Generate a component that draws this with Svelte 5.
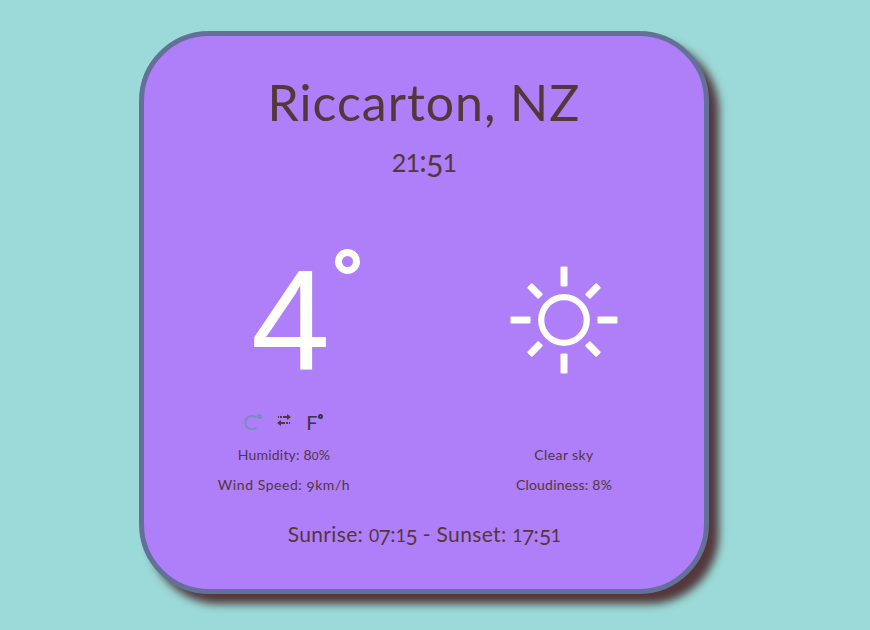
<script>
  const weather = {
    place: 'Riccarton, NZ',
    time: '21:51',
    temperature: '4',
    humidity: 'Humidity: 80%',
    wind: 'Wind Speed: 9km/h',
    sky: 'Clear sky',
    clouds: 'Cloudiness: 8%',
    sun: 'Sunrise: 07:15 - Sunset: 17:51'
  };
  // Old-style figures: 0-2 sit at x-height, 3-5, 7 and 9 drop below the baseline.
  const kind = (c) => ('012'.includes(c) ? 'small' : '34579'.includes(c) ? 'low' : '');
  const rays = [0, 45, 90, 135, 180, 225, 270, 315];
</script>

{#snippet figures(text)}{#each text.split(/([0-9])/) as part}{#if part && kind(part)}<span class={kind(part)}>{part}</span>{:else}{part}{/if}{/each}{/snippet}

<main>
  <section class="card">
    <h1>{weather.place}</h1>
    <div class="time">{@render figures(weather.time)}</div>
    <div class="columns">
      <div class="column">
        <div class="visual temperature">
          <span class="value">{weather.temperature}</span><span class="ring"></span>
        </div>
        <div class="units">
          <span class="unit active">C<i></i></span>
          <svg class="swap" width="14" height="12" viewBox="0 0 14 12" fill="#53373b">
            <path d="M1 2h1v2H1zM3 2h2v2H3zM6 2h4V0l4 3-4 3V4H6zM13 8h-1v2h1zM11 8H9v2h2zM8 8H4V6L0 9l4 3v-2h4z" />
          </svg>
          <span class="unit">F<i></i></span>
        </div>
        <p class="humidity">{@render figures(weather.humidity)}</p>
        <p class="wind">{@render figures(weather.wind)}</p>
      </div>
      <div class="column">
        <div class="visual">
          <svg class="sun" width="110" height="110" viewBox="-55 -55 110 110">
            <circle r="22.800" fill="none" stroke="#fffffb" stroke-width="6.200" />
            {#each rays as angle}
              <rect x="-3.500" y={angle % 90 ? -49 : -53.5} width="7" height={angle % 90 ? 16 : 20} rx="1" fill="#fffffb" transform="rotate({angle})" />
            {/each}
          </svg>
        </div>
        <div class="units"></div>
        <p class="sky">{@render figures(weather.sky)}</p>
        <p class="clouds">{@render figures(weather.clouds)}</p>
      </div>
    </div>
    <div class="sunline">{@render figures(weather.sun)}</div>
  </section>
</main>

<style>
  :global(body) { margin: 0; background: #9bdad8; }
  main {
    height: 630px;
    box-sizing: border-box;
    padding: 31px 0 0 139px;
    overflow: hidden;
    background: #9bdad8;
    font-family: Lato, sans-serif;
    color: #53373b;
  }
  .card {
    box-sizing: border-box;
    width: 570px;
    height: 563px;
    border: 5px solid #637199;
    border-radius: 70px;
    background: #af7ef9;
    box-shadow: 10px 10px 8px #53373b;
    padding-top: 36px;
    text-align: center;
    white-space: nowrap;
  }
  h1 { margin: 0; font-size: 50px; line-height: 60px; font-weight: 400; letter-spacing: 1px; }
  .time { margin-top: 10px; font-size: 30px; line-height: 36px; letter-spacing: -0.9px; }
  .small { font-size: .84em; line-height: 0; }
  .low { position: relative; top: .15em; line-height: 0; }
  .columns { display: flex; margin-top: 33px; }
  .column { width: 280px; }
  .visual { height: 193px; display: flex; justify-content: center; align-items: flex-start; }
  .temperature { color: #fffffb; justify-content: flex-start; }
  .value { margin: 40px 0 0 107px; width: 76px; font-family: "Liberation Sans", sans-serif; font-size: 142px; line-height: 138px; }
  .ring { margin: 38px 0 0 8px; box-sizing: border-box; width: 25px; height: 25px; border: 7px solid; border-radius: 50%; }
  .sun { margin-top: 54px; }
  .units { height: 36px; display: flex; justify-content: center; align-items: center; gap: 15px; font-size: 20px; line-height: 24px; }
  .unit { display: flex; color: #3d304d; }
  .unit i { box-sizing: border-box; width: 5px; height: 5px; margin: 4px 0 0 0; border: 2px solid; border-radius: 50%; }
  .active { color: #7b8bbd; font-size: 21px; margin-left: -2px; }
  .swap { margin-top: -4px; }
  p { margin: 0; font-size: 14px; line-height: 30px; }
  .humidity { letter-spacing: .2px; }
  .wind { letter-spacing: .55px; }
  .sky { letter-spacing: .4px; }
  .clouds { letter-spacing: .2px; }
  .sunline { margin-top: 19px; font-size: 21px; line-height: 30px; letter-spacing: .35px; }
  .sunline .small, .sunline .low { letter-spacing: -0.6px; }
</style>
